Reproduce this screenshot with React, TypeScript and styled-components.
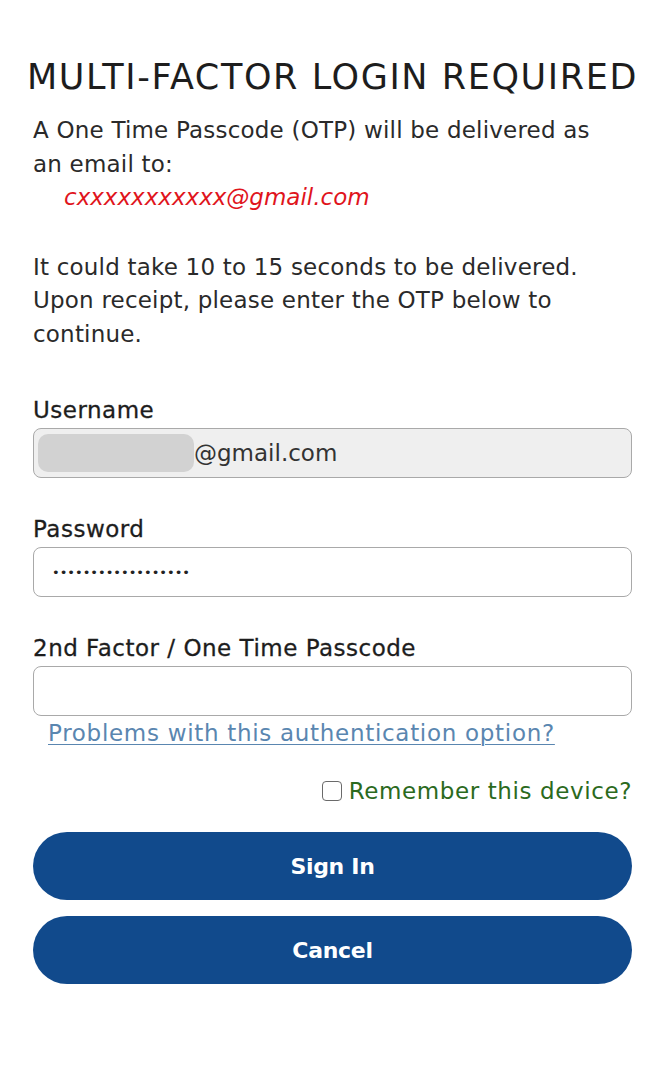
import React from "react";
import styled, { createGlobalStyle } from "styled-components";

const Global = createGlobalStyle`
  html, body { margin: 0; padding: 0; background: #ffffff; }
  body { font-family: "DejaVu Sans", "Liberation Sans", sans-serif; color: #222; }
  * { box-sizing: border-box; }
`;

const Page = styled.main`
  width: 660px;
  padding: 56px 28px 0 33px;
  display: flex;
  flex-direction: column;
`;

const Title = styled.h1`
  margin: 0 0 0 -6px;
  font-size: 35px;
  font-weight: 400;
  letter-spacing: 1.6px;
  line-height: 42px;
  color: #1d1d1d;
  white-space: nowrap;
`;

const Para = styled.p<{ $mt?: number }>`
  margin: ${(p) => p.$mt ?? 0}px 0 0 0;
  font-size: 23px;
  letter-spacing: 0.2px;
  line-height: 33.5px;
  color: #2a2a2a;
`;

const Email = styled.div`
  margin-left: 31px;
  font-size: 23px;
  line-height: 33.5px;
  font-style: italic;
  color: #e0141c;
`;

const Field = styled.div<{ $mt: number }>`
  margin-top: ${(p) => p.$mt}px;
  display: flex;
  flex-direction: column;
  gap: 4px;
`;

const Label = styled.label`
  font-size: 23px;
  letter-spacing: 0.5px;
  line-height: 28px;
  color: #1d1d1d;
  -webkit-text-stroke: 0.3px #1d1d1d;
`;

const Input = styled.div<{ $disabled?: boolean }>`
  height: 50px;
  border: 1px solid #a9a9a9;
  border-radius: 8px;
  background: ${(p) => (p.$disabled ? "#efefef" : "#ffffff")};
  display: flex;
  align-items: center;
  padding: 0 4px;
  font-size: 23px;
  color: #333;
  overflow: hidden;
`;

const Blur = styled.span`
  width: 156px;
  height: 38px;
  border-radius: 10px;
  background: #d2d2d2;
  margin-right: 0;
`;

const Dots = styled.span`
  padding-left: 14px;
  font-size: 13px;
  letter-spacing: 0px;
  color: #222;
`;

const Link = styled.a`
  margin: 3px 0 0 15px;
  font-size: 23px;
  letter-spacing: 0.7px;
  line-height: 28px;
  color: #5a86b0;
  text-decoration: underline;
  text-underline-offset: 3px;
  text-decoration-thickness: 1px;
`;

const RememberRow = styled.div`
  margin-top: 30px;
  display: flex;
  justify-content: flex-end;
  align-items: center;
  gap: 7px;
`;

const Box = styled.span`
  width: 20px;
  height: 20px;
  border: 1.5px solid #6a6a6a;
  border-radius: 4px;
  background: #fff;
`;

const RememberText = styled.span`
  font-size: 23px;
  letter-spacing: 0.6px;
  line-height: 28px;
  color: #2b6a1d;
`;

const Buttons = styled.div`
  margin-top: 27px;
  display: flex;
  flex-direction: column;
  gap: 16px;
`;

const Button = styled.button`
  height: 68px;
  border: none;
  border-radius: 34px;
  background: #114a8c;
  color: #ffffff;
  font-family: "DejaVu Sans", sans-serif;
  font-size: 22px;
  font-weight: 700;
  letter-spacing: -0.3px;
`;

export default function App() {
  return (
    <>
      <Global />
      <Page>
        <Title>MULTI-FACTOR LOGIN REQUIRED</Title>
        <Para $mt={16}>
          A One Time Passcode (OTP) will be delivered as
          <br />
          an email to:
        </Para>
        <Email>cxxxxxxxxxxx@gmail.com</Email>
        <Para $mt={36}>
          It could take 10 to 15 seconds to be delivered.
          <br />
          Upon receipt, please enter the OTP below to
          <br />
          continue.
        </Para>
        <Field $mt={45}>
          <Label>Username</Label>
          <Input $disabled>
            <Blur />
            @gmail.com
          </Input>
        </Field>
        <Field $mt={37}>
          <Label>Password</Label>
          <Input>
            <Dots>••••••••••••••••••</Dots>
          </Input>
        </Field>
        <Field $mt={37}>
          <Label>2nd Factor / One Time Passcode</Label>
          <Input />
        </Field>
        <Link href="#">Problems with this authentication option?</Link>
        <RememberRow>
          <Box />
          <RememberText>Remember this device?</RememberText>
        </RememberRow>
        <Buttons>
          <Button>Sign In</Button>
          <Button>Cancel</Button>
        </Buttons>
      </Page>
    </>
  );
}
